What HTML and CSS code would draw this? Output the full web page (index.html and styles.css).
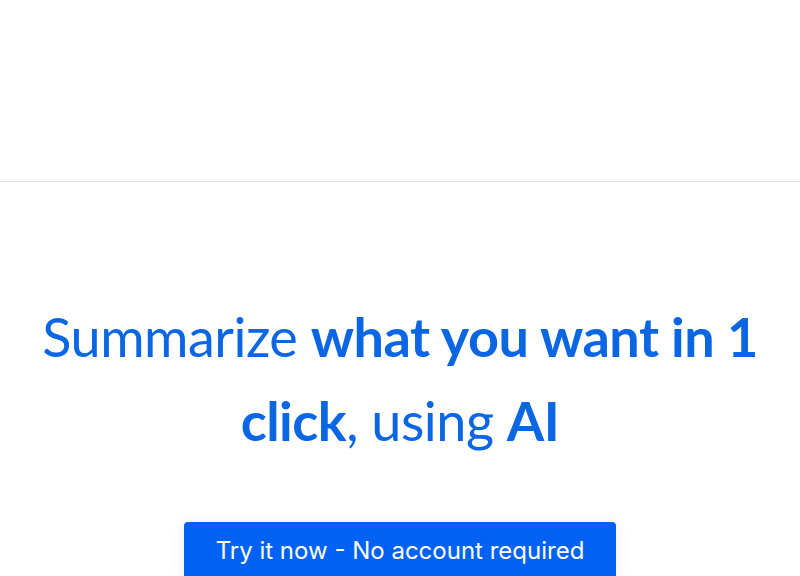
FILE: index.html
```html
<!DOCTYPE html>
<html>
<head>
<meta charset="utf-8">
<link rel="stylesheet" href="styles.css">
</head>
<body>
<header class="topbar"></header>
<main class="hero">
  <h1 class="title"><span class="line">Summarize <strong>what you want in 1</strong></span> <span class="line"><strong>click</strong>, using <strong>AI</strong></span></h1>
  <a class="cta" href="#">Try it now - No account required</a>
</main>
</body>
</html>
```
FILE: styles.css
```css
html, body {
  margin: 0;
  padding: 0;
  background: #ffffff;
  overflow: hidden;
}
.topbar {
  height: 181px;
  border-bottom: 1px solid #e4e4e4;
}
.hero {
  display: flex;
  flex-direction: column;
  align-items: center;
  padding-top: 113px;
}
.title {
  margin: 0;
  width: 720px;
  text-align: center;
  font-family: "Lato", "Noto Sans", sans-serif;
  font-weight: 400;
  font-size: 54px;
  line-height: 84px;
  color: #0a66e3;
  letter-spacing: -0.5px;
}
.title .line {
  display: block;
}
.title strong {
  font-weight: 700;
}
.cta {
  margin-top: 59px;
  display: block;
  width: 432px;
  height: 60px;
  box-sizing: border-box;
  padding-top: 14px;
  text-align: center;
  background: #0062f5;
  color: #ffffff;
  border-radius: 4px;
  text-decoration: none;
  font-family: "Inter", "Roboto", sans-serif;
  font-size: 24px;
  line-height: 30px;
  font-weight: 400;
  letter-spacing: 0;
  box-shadow: 0 0 14px rgba(0, 40, 120, 0.08);
}
```
